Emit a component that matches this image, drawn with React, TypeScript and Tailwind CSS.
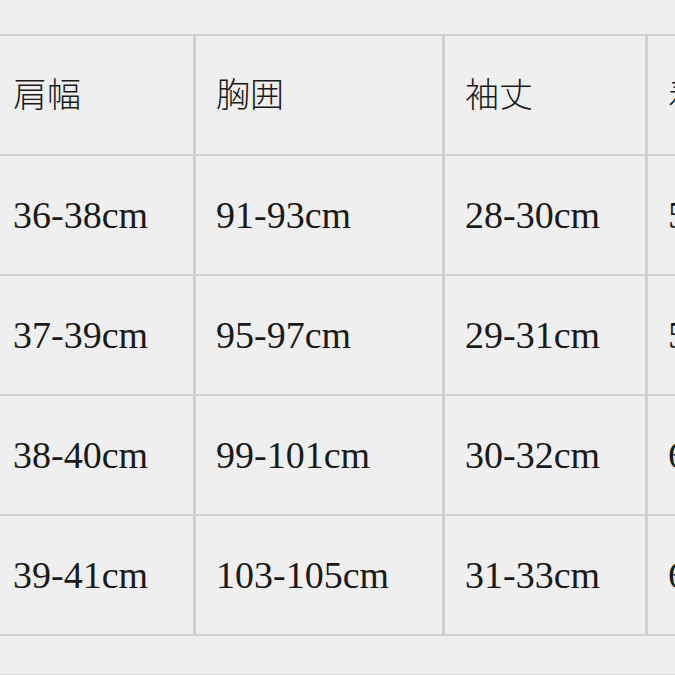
import React from 'react';

const rows: string[][] = [
  ['肩幅', '胸囲', '袖丈', '着丈'],
  ['36-38cm', '91-93cm', '28-30cm', '58-60cm'],
  ['37-39cm', '95-97cm', '29-31cm', '59-61cm'],
  ['38-40cm', '99-101cm', '30-32cm', '60-62cm'],
  ['39-41cm', '103-105cm', '31-33cm', '61-63cm'],
];

const App = () => {
  return (
    <div
      className="w-[675px] h-[675px] overflow-hidden bg-[#efefef] border-b border-[#dadada] text-[#1a1a1a]"
      style={{ fontFamily: '"Liberation Serif", "Noto Sans CJK JP", serif' }}
    >
      {/* size chart, cropped on the left and right like the photo */}
      <div className="ml-[-9px] mt-[34px] w-max bg-[#d0d0d0] py-[2px] px-[3px]">
        <div className="grid grid-cols-[199px_246px_200px_200px] auto-rows-[118px] gap-x-[3px] gap-y-[2px]">
          {rows.map((row, r) =>
            row.map((cell, c) => (
              <div
                key={`${r}-${c}`}
                className={`bg-[#efefef] flex items-center ${c === 0 ? 'pl-[19px]' : 'pl-5'} ${
                  r === 0 ? 'text-[34px] font-light' : 'text-[38px]'
                }`}
              >
                {cell}
              </div>
            ))
          )}
        </div>
      </div>
    </div>
  );
};

export default App;
